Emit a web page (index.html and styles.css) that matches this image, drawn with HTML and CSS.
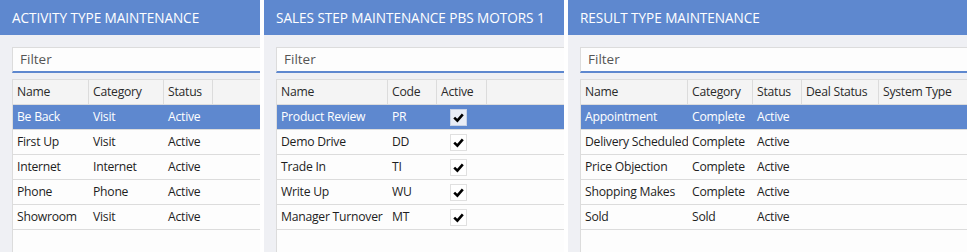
FILE: index.html
```html
<!DOCTYPE html>
<html>
<head>
<meta charset="utf-8">
<link rel="stylesheet" href="styles.css">
</head>
<body>
<div class="board">
  <section class="panel panel-activity">
    <div class="panel-title">ACTIVITY TYPE MAINTENANCE</div>
    <div class="panel-body">
      <div class="filter">Filter</div>
      <div class="grid cols-activity">
        <div class="row head"><div>Name</div><div>Category</div><div>Status</div><div></div></div>
        <div class="row selected"><div>Be Back</div><div>Visit</div><div>Active</div><div></div></div>
        <div class="row"><div>First Up</div><div>Visit</div><div>Active</div><div></div></div>
        <div class="row"><div>Internet</div><div>Internet</div><div>Active</div><div></div></div>
        <div class="row"><div>Phone</div><div>Phone</div><div>Active</div><div></div></div>
        <div class="row"><div>Showroom</div><div>Visit</div><div>Active</div><div></div></div>
      </div>
    </div>
  </section>
  <section class="panel panel-sales">
    <div class="panel-title">SALES STEP MAINTENANCE PBS MOTORS 1</div>
    <div class="panel-body">
      <div class="filter">Filter</div>
      <div class="grid cols-sales">
        <div class="row head"><div>Name</div><div>Code</div><div>Active</div><div></div></div>
        <div class="row selected"><div>Product Review</div><div>PR</div><div class="check-cell"><span class="check"><svg viewBox="0 0 17 17" width="17" height="17"><path d="M4.2 8.6 L7.4 11.6 L12.8 5.4" /></svg></span></div><div></div></div>
        <div class="row"><div>Demo Drive</div><div>DD</div><div class="check-cell"><span class="check"><svg viewBox="0 0 17 17" width="17" height="17"><path d="M4.2 8.6 L7.4 11.6 L12.8 5.4" /></svg></span></div><div></div></div>
        <div class="row"><div>Trade In</div><div>TI</div><div class="check-cell"><span class="check"><svg viewBox="0 0 17 17" width="17" height="17"><path d="M4.2 8.6 L7.4 11.6 L12.8 5.4" /></svg></span></div><div></div></div>
        <div class="row"><div>Write Up</div><div>WU</div><div class="check-cell"><span class="check"><svg viewBox="0 0 17 17" width="17" height="17"><path d="M4.2 8.6 L7.4 11.6 L12.8 5.4" /></svg></span></div><div></div></div>
        <div class="row"><div>Manager Turnover</div><div>MT</div><div class="check-cell"><span class="check"><svg viewBox="0 0 17 17" width="17" height="17"><path d="M4.2 8.6 L7.4 11.6 L12.8 5.4" /></svg></span></div><div></div></div>
      </div>
    </div>
  </section>
  <section class="panel panel-result">
    <div class="panel-title">RESULT TYPE MAINTENANCE</div>
    <div class="panel-body">
      <div class="filter">Filter</div>
      <div class="grid cols-result">
        <div class="row head"><div>Name</div><div>Category</div><div>Status</div><div>Deal Status</div><div>System Type</div></div>
        <div class="row selected"><div>Appointment</div><div>Complete</div><div>Active</div><div></div><div></div></div>
        <div class="row"><div>Delivery Scheduled</div><div>Complete</div><div>Active</div><div></div><div></div></div>
        <div class="row"><div>Price Objection</div><div>Complete</div><div>Active</div><div></div><div></div></div>
        <div class="row"><div>Shopping Makes</div><div>Complete</div><div>Active</div><div></div><div></div></div>
        <div class="row"><div>Sold</div><div>Sold</div><div>Active</div><div></div><div></div></div>
      </div>
    </div>
  </section>
</div>
</body>
</html>
```

FILE: styles.css
```css
* { box-sizing: border-box; }
html, body { margin: 0; padding: 0; }
body {
  background: #ffffff;
  font-family: "Open Sans", "Noto Sans", sans-serif;
  color: #1e1e1e;
  width: 967px;
  height: 252px;
  overflow: hidden;
}
.board {
  display: flex;
  gap: 4px;
  height: 252px;
}
.panel {
  background: #eff0f4;
  overflow: hidden;
  display: flex;
  flex-direction: column;
}
.panel-activity { flex: 0 0 260px; }
.panel-sales { flex: 0 0 300px; }
.panel-result { flex: 1 1 auto; }
.panel-title {
  height: 35px;
  background: #5e88cf;
  color: #ffffff;
  font-size: 13.6px;
  letter-spacing: -0.05px;
  line-height: 36px;
  padding-left: 12px;
  white-space: nowrap;
}
.panel-body {
  flex: 1;
  padding: 12px 0 0 12px;
  display: flex;
  flex-direction: column;
  gap: 6px;
  min-height: 0;
}
.filter {
  height: 26px;
  background: #fdfdfd;
  border-top: 1px solid #dcdcdc;
  border-left: 1px solid #dcdcdc;
  border-bottom: 2px solid #5e88cf;
  padding-left: 7px;
  font-size: 13.5px;
  line-height: 23px;
  color: #555555;
}
.grid {
  flex: 1;
  background: #fdfdfd;
  border-left: 1px solid #dcdcdc;
  border-top: 1px solid #dcdcdc;
  font-size: 12.2px;
  letter-spacing: -0.25px;
}
.row {
  display: grid;
  height: 25px;
  border-bottom: 1px solid #dcdcdc;
  line-height: 24px;
  white-space: nowrap;
}
.row > div {
  padding-left: 4px;
  overflow: hidden;
}
.cols-activity .row { grid-template-columns: 76px 75px 49px 1fr; }
.cols-sales .row { grid-template-columns: 111px 49px 50px 1fr; }
.cols-result .row { grid-template-columns: 107px 65px 49px 77px 1fr; }
.row.head {
  background: #f4f4f4;
  color: #2a2a2a;
}
.row.head > div { border-right: 1px solid #dcdcdc; }
.row.head > div:last-child { border-right: none; }
.row.selected {
  background: #5e88cf;
  color: #ffffff;
}
.check-cell {
  display: flex;
  align-items: center;
}
.check-cell.check-cell { padding-left: 13px; }
.check {
  display: block;
  width: 17px;
  height: 17px;
  background: #ffffff;
  border: 1px solid #e0e0e0;
}
.check svg {
  display: block;
  margin: -1px;
}
.check path {
  fill: none;
  stroke: #000000;
  stroke-width: 2.6;
  stroke-linecap: butt;
  stroke-linejoin: miter;
}
.selected .check {
  background: #e9edf6;
  border-color: #c9d3e6;
}
```
